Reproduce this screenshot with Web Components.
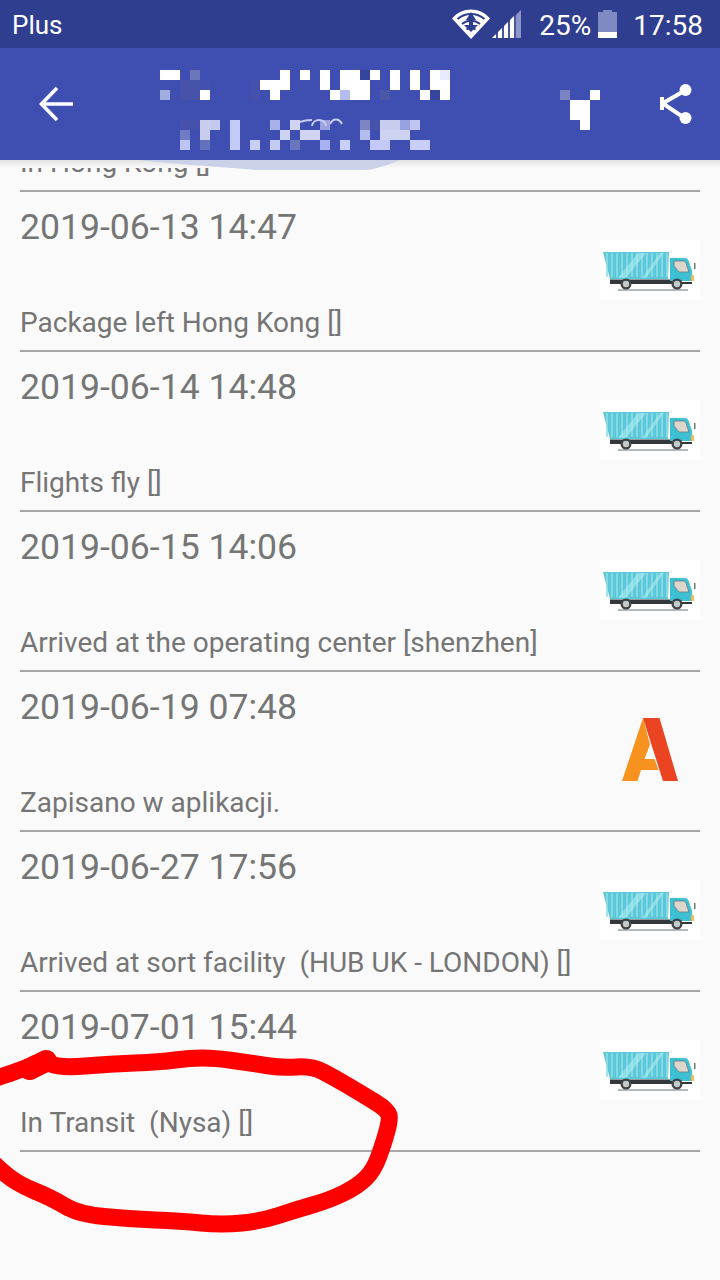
<!DOCTYPE html>
<html>
<head>
<meta charset="utf-8">
<title>Tracking</title>
<style>
html, body { margin: 0; padding: 0; }
body {
  width: 720px;
  height: 1280px;
  overflow: hidden;
  position: relative;
  background: #fafafa;
  font-family: Roboto, "Liberation Sans", sans-serif;
}
</style>
</head>
<body>
<status-bar carrier="Plus" battery="25%" time="17:58"></status-bar>
<app-bar></app-bar>
<track-list>
  <track-row date="" text="In Hong Kong []" icon=""></track-row>
  <track-row date="2019-06-13 14:47" text="Package left Hong Kong []" icon="truck"></track-row>
  <track-row date="2019-06-14 14:48" text="Flights fly []" icon="truck"></track-row>
  <track-row date="2019-06-15 14:06" text="Arrived at the operating center [shenzhen]" icon="truck"></track-row>
  <track-row date="2019-06-19 07:48" text="Zapisano w aplikacji." icon="logo"></track-row>
  <track-row date="2019-06-27 17:56" text="Arrived at sort facility&#160; (HUB UK - LONDON) []" icon="truck"></track-row>
  <track-row date="2019-07-01 15:44" text="In Transit&#160; (Nysa) []" icon="truck"></track-row>
</track-list>
<red-scribble></red-scribble>

<script>
const cell = (x, y, w, h, c) => `<rect x="${x}" y="${y}" width="${w}" height="${h}" fill="${c}"/>`;

class StatusBar extends HTMLElement {
  connectedCallback() {
    this.attachShadow({ mode: 'open' }).innerHTML = `
      <style>
        :host {
          display: flex;
          align-items: center;
          height: 48px;
          padding: 0 17px 0 12px;
          background: #303e8f;
          color: #fff;
          font-size: 27px;
          box-sizing: border-box;
          position: relative;
          z-index: 3;
        }
        .carrier { flex: 1; font-size: 26px; padding-top: 2px; }
        svg { display: block; flex: none; }
        .wifi { margin-right: 2px; }
        .pct { margin-left: 18px; font-size: 28px; padding-top: 2px; }
        .batt { margin-left: 7px; }
        .time { margin-left: 16px; font-size: 28px; padding-top: 2px; }
      </style>
      <span class="carrier">${this.getAttribute('carrier')}</span>
      <svg class="wifi" width="38" height="30" viewBox="0 0 38 30">
        <path d="M0 9.500C5 3.500 12 .5 19 .5s14 3 19 9L19 30z" fill="#fff"/>
        <path d="M5.500 10C9 7 14 5 19 5s10 2 13.500 5M10 15c2.500-2 5.500-3.200 9-3.200s6.500 1.200 9 3.200M14.500 20.500c1.300-1 2.800-1.500 4.500-1.500s3.200.5 4.500 1.500" fill="none" stroke="#303e8f" stroke-width="2"/>
        <path d="M19 3l5 8h-3v5h5l-7 7-7-7h5v-5h-3z" fill="#303e8f"/>
      </svg>
      <svg width="29" height="28" viewBox="0 0 29 28">
        <path d="M0 28L29 0v28z" fill="#fff" opacity=".12"/>
        <path d="M0 28l4-4v4zM6 28V22l4-4v10zM12 28V16l4-4v16zM18 28V10l4-4v22z" fill="#fff"/>
        <path d="M24 28V5l5-5v28z" fill="#8d96c8"/>
      </svg>
      <span class="pct">${this.getAttribute('battery')}</span>
      <svg class="batt" width="19" height="28" viewBox="0 0 19 28">
        <path d="M5 0h9v2h5v26H0V2h5z" fill="#7f89c2"/>
        <rect y="22" width="19" height="6" fill="#fff"/>
      </svg>
      <span class="time">${this.getAttribute('time')}</span>
    `;
  }
}

class AppBar extends HTMLElement {
  connectedCallback() {
    const w = '#fff';
    // censored title, 10px mosaic cells starting at x 160 y 70 of the page
    const title = [
      [160,70,20,10,w],[190,70,10,10,'#6b77b8'],[180,80,20,20,'#4753a8'],[200,80,10,10,'#4350ad'],
      [160,90,10,10,'#a3acdf'],[200,90,10,10,w],[250,80,10,20,'#4450ab'],
      [260,80,30,10,w],[280,70,10,20,w],[270,80,10,20,w],[300,70,10,10,w],
      [320,70,10,20,w],[330,90,10,10,w],[340,70,30,30,w],[340,90,10,10,'#b4bcf0'],[360,70,10,10,'#36459c'],
      [370,70,10,10,w],[380,90,10,10,'#4a56a6'],[390,70,10,20,w],[410,70,10,20,w],[420,90,10,10,w],
      [430,70,20,20,w],[440,70,10,10,'#e6eafa'],[440,90,10,10,w],[430,90,10,10,'#36459c'],
      [180,120,20,10,'#4551aa'],[180,130,10,10,'#6f7cc4'],[180,140,10,10,'#bcc4f2'],
      [200,120,10,20,'#c8cdee'],[210,120,10,10,'#c4caee'],[200,140,10,10,'#6272bc'],
      [230,120,10,30,'#c2caf6'],[250,140,10,10,'#c8cff5'],
      [270,120,10,10,'#a8b1e8'],[270,140,10,10,'#c4caf2'],[280,130,10,10,'#cdd2f5'],
      [290,120,10,10,'#cfd4f0'],[290,140,10,10,'#6a76c0'],
      [300,130,20,10,'#d0d4f0'],[320,120,10,10,'#9aa3de'],[320,140,10,10,'#a8b2ee'],[340,140,10,10,'#c8cff8'],
      [360,120,10,10,'#7c86c4'],[360,130,10,10,'#b4bcec'],[370,120,10,10,'#4652a8'],
      [380,120,20,10,'#c8cdf0'],[400,120,10,10,'#98a2e0'],[410,120,10,10,'#c0c6f0'],
      [370,140,20,10,'#c4caf8'],[380,130,30,10,'#cdd2f0'],[410,140,20,10,'#c8cef8']
    ].map(c => cell(c[0] - 160, c[1] - 70, c[2], c[3], c[4])).join('');
    this.attachShadow({ mode: 'open' }).innerHTML = `
      <style>
        :host {
          display: flex;
          align-items: center;
          height: 112px;
          padding-left: 39px;
          background: #3e4fb1;
          box-sizing: border-box;
          position: relative;
          z-index: 2;
        }
        svg { display: block; flex: none; overflow: visible; }
        .title { margin-left: 87px; margin-top: 12px; }
        .mark { margin-left: 110px; margin-top: 12px; }
        .share { margin-left: 60px; }
      </style>
      <svg width="34" height="36" viewBox="0 0 34 36">
        <path d="M34 18H3M18 2L2.500 18 18 34" fill="none" stroke="#fff" stroke-width="3.600"/>
      </svg>
      <svg class="title" width="290" height="80" viewBox="0 0 290 80">
        ${title}
        <path d="M140 52c5-2 9-2 12-2M152 56c1-8 13-8 14 0M170 54c3-6 9-6 12 0" fill="none" stroke="#c8cef2" stroke-width="2"/>
      </svg>
      <svg class="mark" width="40" height="40" viewBox="0 0 40 40">
        ${cell(0,0,10,10,'#7a84c0')}${cell(30,0,10,10,w)}${cell(10,10,20,20,w)}${cell(20,30,10,10,w)}
      </svg>
      <svg class="share" width="33" height="44" viewBox="0 0 33 44">
        <path d="M26 8L5 20v3l21 14" fill="none" stroke="#fff" stroke-width="4"/>
        <circle cx="25.500" cy="8" r="6" fill="#fff"/>
        <circle cx="25.500" cy="36" r="6" fill="#fff"/>
        <rect x="0" y="15" width="4" height="13" fill="#fff"/>
      </svg>
    `;
  }
}

class TrackList extends HTMLElement {
  constructor() {
    super();
    this.attachShadow({ mode: 'open' }).innerHTML = `
      <style>
        :host { display: block; height: 1120px; overflow: hidden; position: relative; }
        .shade { position: absolute; left: 0; right: 0; top: 0; height: 8px; z-index: 1; background: linear-gradient(#e2e2e4, #fafafa); }
        .smudge { position: absolute; left: 0; top: 0; z-index: 2; display: block; }
        .scroller { margin-top: -128px; display: flex; flex-direction: column; padding: 0 20px; }
      </style>
      <div class="shade"></div>
      <svg class="smudge" width="720" height="12" viewBox="0 0 720 12">
        <path d="M140 0C170 4 210 6 257 10H367C380 8 390 4 400 0z" fill="#ccd1ea"/>
      </svg>
      <div class="scroller"><slot></slot></div>
    `;
  }
}

class TrackRow extends HTMLElement {
  connectedCallback() {
    const kind = this.getAttribute('icon');
    const icon = kind === 'logo' ? '<a-logo></a-logo>' : kind === 'truck' ? '<truck-icon></truck-icon>' : '';
    this.attachShadow({ mode: 'open' }).innerHTML = `
      <style>
        :host {
          display: grid;
          grid-template-columns: 1fr 100px;
          grid-template-rows: 48px 60px 46px;
          height: 160px;
          box-sizing: border-box;
          border-bottom: 2px solid #a8a8a8;
          color: #757575;
        }
        .date { grid-column: 1 / 3; font-size: 35.600px; line-height: 36px; padding-top: 17px; box-sizing: border-box; height: 48px; }
        .icon { grid-column: 2; grid-row: 2; }
        .text { grid-column: 1 / 3; grid-row: 3; font-size: 28px; line-height: 46px; white-space: nowrap; }
      </style>
      <div class="date">${this.getAttribute('date')}</div>
      <div class="icon">${icon}</div>
      <div class="text">${this.getAttribute('text')}</div>
    `;
  }
}

class TruckIcon extends HTMLElement {
  connectedCallback() {
    let stripes = '';
    for (let x = 7; x < 68; x += 5) {
      stripes += `<path d="M${x} 13v24" stroke="#8fdde8" stroke-width="1.600"/>`;
    }
    this.attachShadow({ mode: 'open' }).innerHTML = `
      <style>
        :host { display: block; width: 100px; height: 60px; background: #fff; }
        svg { display: block; }
      </style>
      <svg width="100" height="60" viewBox="0 0 100 60">
        <rect x="18" y="49" width="70" height="2" fill="#b2bcc0"/>
        <path d="M3 12h66l-1 27H10z" fill="#5ac8d8"/>
        ${stripes}
        <path d="M18 38L38 13h8L26 38zM42 38L60 13h4L46 38z" fill="#b4eef2" opacity=".55"/>
        <path d="M10 39.500h62v2.500h20v2H10z" fill="#33373a"/>
        <path d="M70 18h14c3 0 4 1 5 4l3 9v10H70z" fill="#3cc0d2"/>
        <path d="M74 21h9c1.500 0 2 .5 3 2l3 9H79l-5-6z" fill="#dcd6cc" stroke="#5e7a80" stroke-width=".8"/>
        <path d="M91 35h3v6h-3z" fill="#e3c25a"/>
        <rect x="94" y="23" width="1.500" height="6" fill="#6c7a80"/>
        <circle cx="26" cy="44" r="5.500" fill="#3f4447"/>
        <circle cx="26" cy="44" r="3.200" fill="#c4cbcd"/>
        <circle cx="77" cy="44" r="5.500" fill="#3f4447"/>
        <circle cx="77" cy="44" r="3.200" fill="#c4cbcd"/>
      </svg>
    `;
  }
}

class ALogo extends HTMLElement {
  connectedCallback() {
    this.attachShadow({ mode: 'open' }).innerHTML = `
      <style>
        :host { display: block; width: 100px; height: 60px; }
        svg { display: block; overflow: visible; }
      </style>
      <svg width="100" height="60" viewBox="0 2 100 60">
        <path d="M43 0L22 63h15.500l3.500-11h17.500l-4-11H44.500L50 26.500z" fill="#f7921e"/>
        <path d="M43 0h16.500L78 63H63z" fill="#ea4423"/>
      </svg>
    `;
  }
}

class RedScribble extends HTMLElement {
  connectedCallback() {
    const pts = [[-10,1080],[22,1070],[42,1060],[60,1068],[110,1064],[160,1062],[190,1058],[215,1058],[250,1063],[282,1068],[312,1066],[335,1078],[362,1094],[388,1110],[390,1120],[384,1142],[374,1170],[358,1186],[330,1200],[295,1210],[262,1221],[222,1225],[180,1221],[130,1219],[78,1214],[52,1198],[15,1183],[-10,1160]];
    let d = `M${pts[0][0]} ${pts[0][1]}`;
    for (let i = 1; i < pts.length - 1; i++) {
      const mx = (pts[i][0] + pts[i + 1][0]) / 2;
      const my = (pts[i][1] + pts[i + 1][1]) / 2;
      d += `Q${pts[i][0]} ${pts[i][1]} ${mx} ${my}`;
    }
    d += `L${pts[pts.length - 1][0]} ${pts[pts.length - 1][1]}`;
    this.attachShadow({ mode: 'open' }).innerHTML = `
      <style>
        :host { display: block; position: absolute; left: 0; top: 0; width: 720px; height: 1280px; pointer-events: none; z-index: 5; }
        svg { display: block; }
      </style>
      <svg width="720" height="1280" viewBox="0 0 720 1280">
        <path d="${d}" fill="none" stroke="#fe0000" stroke-width="17" stroke-linecap="round" stroke-linejoin="round"/>
        <path d="M30 1069l16-8" stroke="#fe0000" stroke-width="22" stroke-linecap="round"/>
      </svg>
    `;
  }
}

customElements.define('status-bar', StatusBar);
customElements.define('app-bar', AppBar);
customElements.define('track-list', TrackList);
customElements.define('track-row', TrackRow);
customElements.define('truck-icon', TruckIcon);
customElements.define('a-logo', ALogo);
customElements.define('red-scribble', RedScribble);
</script>
</body>
</html>
